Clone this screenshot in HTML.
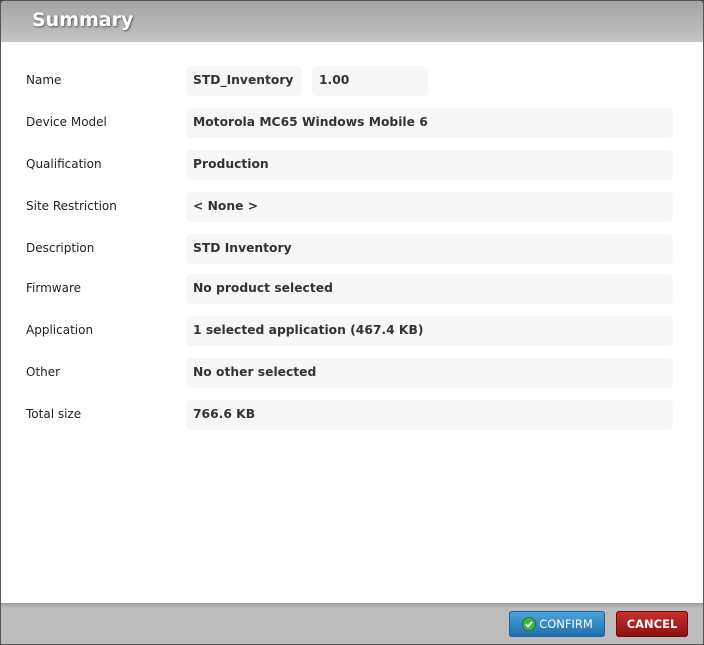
<!DOCTYPE html>
<html><head><style>
*{margin:0;padding:0;box-sizing:border-box}
body{width:704px;height:645px;background:#3a4a50;font-family:"DejaVu Sans","Liberation Sans",sans-serif;overflow:hidden}
.dlg{position:absolute;left:0;top:0;width:704px;height:645px;background:#fff;border-radius:4px 4px 0 0;overflow:hidden;border:1px solid #555}
.hd{position:absolute;left:0;top:0;width:100%;height:41px;background:linear-gradient(#a4a4a4,#c4c4c4);}
.hd span{position:absolute;left:31px;top:8px;font-size:19px;font-weight:bold;color:#fff;text-shadow:1px 1px 2px #555;font-family:"DejaVu Sans",sans-serif}
.c{position:absolute;left:0;top:1px;width:100%;height:500px}
.lbl{position:absolute;left:25px;font-size:12px;color:#222}
.f{position:absolute;background:#f7f7f7;border-radius:5px;height:30px;font-size:12.3px;font-weight:bold;color:#333;padding-left:7px;line-height:29px}
.ft{position:absolute;left:0;top:602px;width:100%;height:42px;background:linear-gradient(#9a9a9a,#bdbdbd 5px,#bdbdbd)}
.btn{position:absolute;top:8px;height:26px;border-radius:3px;font-size:11.5px;color:#fff;line-height:25px;text-align:center}
</style></head><body>
<div class="dlg">
<div class="hd"><span>Summary</span></div>
<div class="c">
<div class="lbl" style="top:71px">Name</div>
<div class="f" style="left:185px;top:64px;width:116px">STD_Inventory</div>
<div class="f" style="left:311px;top:64px;width:116px">1.00</div>
<div class="lbl" style="top:113px">Device Model</div>
<div class="f" style="left:185px;top:106px;width:487px">Motorola MC65 Windows Mobile 6</div>
<div class="lbl" style="top:155px">Qualification</div>
<div class="f" style="left:185px;top:148px;width:487px">Production</div>
<div class="lbl" style="top:197px">Site Restriction</div>
<div class="f" style="left:185px;top:190px;width:487px">&lt; None &gt;</div>
<div class="lbl" style="top:239px">Description</div>
<div class="f" style="left:185px;top:232px;width:487px">STD Inventory</div>
<div class="lbl" style="top:279px">Firmware</div>
<div class="f" style="left:185px;top:272px;width:487px">No product selected</div>
<div class="lbl" style="top:321px">Application</div>
<div class="f" style="left:185px;top:314px;width:487px">1 selected application (467.4 KB)</div>
<div class="lbl" style="top:363px">Other</div>
<div class="f" style="left:185px;top:356px;width:487px">No other selected</div>
<div class="lbl" style="top:405px">Total size</div>
<div class="f" style="left:185px;top:398px;width:487px">766.6 KB</div>
</div>
<div class="ft">
<div class="btn" style="left:508px;width:96px;background:linear-gradient(#4aa3dc,#1f6fae);border:1px solid #1a5f95;padding-left:18px">
<svg style="position:absolute;left:12px;top:5px" width="14" height="14" viewBox="0 0 14 14"><circle cx="7" cy="7" r="6.5" fill="#3cb44a" stroke="#1e7a2a"/><path d="M3.8 7.2l2.2 2.2 4.2-4.6" stroke="#fff" stroke-width="1.8" fill="none"/></svg>CONFIRM</div>
<div class="btn" style="left:615px;width:72px;background:linear-gradient(#c8302c,#8e1010);border:1px solid #6e0c0c;font-weight:bold">CANCEL</div>
</div>
</div>
</body></html>
